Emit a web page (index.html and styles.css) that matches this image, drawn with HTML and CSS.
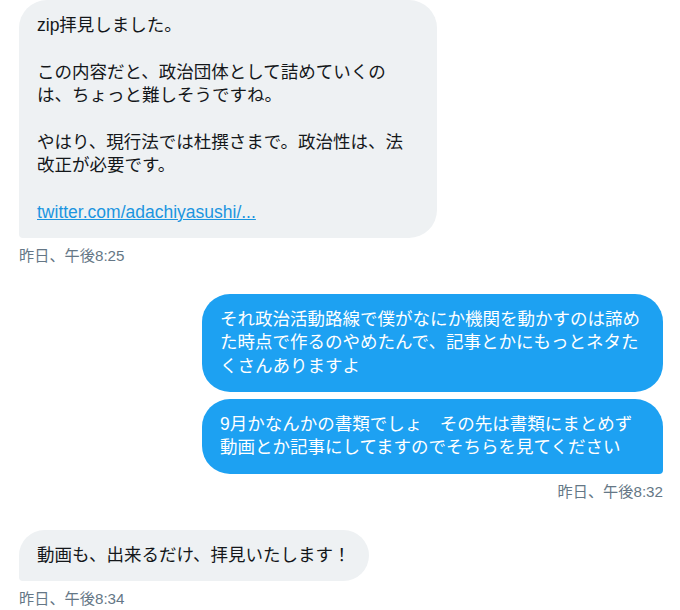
FILE: index.html
```html
<!DOCTYPE html>
<html lang="ja">
<head>
  <meta charset="UTF-8">
  <meta name="viewport" content="width=device-width, initial-scale=1.0">
  <title>メッセージ</title>
  <link rel="stylesheet" href="styles.css">
</head>
<body>
  <div class="conversation">

    <div class="entry received">
      <div class="bubble last">
        zip拝見しました。<br><br>
        この内容だと、政治団体として詰めていくのは、ちょっと難しそうですね。<br><br>
        やはり、現行法では杜撰さまで。政治性は、法改正が必要です。<br><br>
        <a href="#">twitter.com/adachiyasushi/...</a>
      </div>
      <div class="time">昨日、午後8:25</div>
    </div>

    <div class="entry sent">
      <div class="bubble">それ政治活動路線で僕がなにか機関を動かすのは諦めた時点で作るのやめたんで、記事とかにもっとネタたくさんありますよ</div>
      <div class="bubble last">9月かなんかの書類でしょ　その先は書類にまとめず動画とか記事にしてますのでそちらを見てください</div>
      <div class="time">昨日、午後8:32</div>
    </div>

    <div class="entry received">
      <div class="bubble last">動画も、出来るだけ、拝見いたします！</div>
      <div class="time">昨日、午後8:34</div>
    </div>

  </div>
</body>
</html>
```

FILE: styles.css
```css
body {
  margin: 0;
  padding: 0;
  background-color: #fff;
  font-family: "Liberation Sans", "Noto Sans CJK JP", sans-serif;
  color: #14171a;
}

.conversation {
  display: flex;
  flex-direction: column;
  gap: 28px;
  padding: 0 17px 0 19px;
}

.entry {
  display: flex;
  flex-direction: column;
  gap: 7px;
}

.received {
  align-items: flex-start;
}

.sent {
  align-items: flex-end;
}

.bubble {
  padding: 14px 18px;
  font-size: 17.5px;
  line-height: 23.33px;
  border-radius: 28px;
  box-sizing: border-box;
}

.received .bubble {
  max-width: 418px;
  background-color: #eef1f3;
  color: #14171a;
}

.received .bubble.last {
  border-bottom-left-radius: 4px;
}

.sent .bubble {
  max-width: 461px;
  background-color: #1da1f2;
  color: #fff;
}

.sent .bubble.last {
  border-bottom-right-radius: 4px;
}

.bubble a {
  color: #1b95e0;
  text-decoration: underline;
}

.time {
  margin-top: 1px;
  font-size: 15.2px;
  line-height: 20px;
  color: #657786;
}
```
